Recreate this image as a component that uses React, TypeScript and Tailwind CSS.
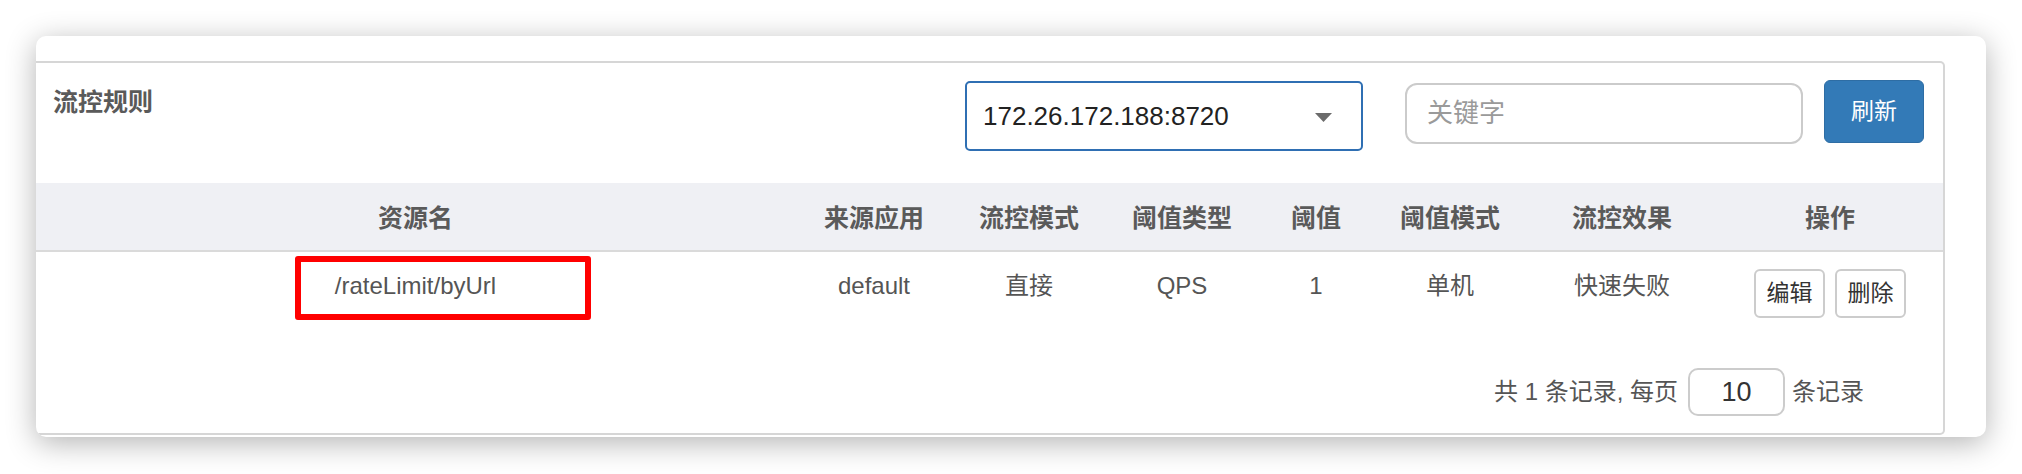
import React from "react";

// column widths of the rules table (px)
const gridCols = "grid grid-cols-[759px_158px_152px_154px_114px_154px_190px_226px]";

const headers = ["资源名", "来源应用", "流控模式", "阈值类型", "阈值", "阈值模式", "流控效果", "操作"];
const row = ["/rateLimit/byUrl", "default", "直接", "QPS", "1", "单机", "快速失败"];

export default function App() {
  return (
    <div className="w-[2022px] h-[474px] bg-white pt-[36px] pl-[36px] font-['Liberation_Sans','Noto_Sans_CJK_SC',sans-serif]">
      {/* Card */}
      <div className="w-[1950px] h-[401px] bg-white rounded-[10px] overflow-hidden shadow-[0_6px_30px_rgba(0,0,0,0.3)] pt-[25px]">
        {/* Panel */}
        <div className="w-[1909px] h-[374px] border-t-2 border-r-2 border-b-2 border-[#d6d6d6] rounded-r-[5px] flex flex-col">
          {/* Top bar */}
          <div className="h-[120px] flex items-start">
            <div className="pl-[17px] pt-[22px] text-[25px] leading-[34px] font-semibold text-[#5a5a5a]">流控规则</div>
            <div className="ml-auto mr-[19px] pt-[17px] flex items-start">
              <div className="mt-[1px] w-[398px] h-[70px] border-2 border-[#2f6fb3] rounded-[5px] flex items-center justify-between pl-[16px] pr-[29px]">
                <span className="text-[26px] text-[#222]">172.26.172.188:8720</span>
                <svg width="17" height="9" viewBox="0 0 17 9" className="mt-[2px]">
                  <polygon points="0,0 17,0 8.5,9" fill="#6b6b6b" />
                </svg>
              </div>
              <input
                className="ml-[42px] mt-[3px] w-[398px] h-[61px] border-2 border-[#cbcbcb] rounded-[12px] pl-[20px] text-[26px] text-[#333] outline-none placeholder:text-[#9a9a9a]"
                placeholder="关键字"
              />
              <button className="ml-[21px] w-[100px] h-[63px] bg-[#337ab7] border border-[#2e6da4] rounded-[6px] text-white text-[23px]">
                刷新
              </button>
            </div>
          </div>

          {/* Table header */}
          <div className={`${gridCols} h-[69px] bg-[#eff0f4] border-b-2 border-[#dadada] text-center text-[25px] font-semibold text-[#5a5a5a]`}>
            {headers.map((h) => (
              <div key={h} className="pt-[19px] leading-[32px]">{h}</div>
            ))}
          </div>

          {/* Row */}
          <div className={`${gridCols} h-[86px] text-center text-[24px] text-[#555]`}>
            {row.map((c, i) => (
              <div key={i} className="relative pt-[20px] leading-[28px]">
                {c}
                {i === 0 && (
                  <div className="absolute left-[259px] top-[4px] w-[296px] h-[64px] border-[6px] border-[#ff0000] rounded-[3px]" />
                )}
              </div>
            ))}
            <div className="flex justify-center gap-[10px] pt-[17px]">
              <button className="w-[71px] h-[49px] border-2 border-[#cccccc] rounded-[6px] text-[23px] text-[#333] bg-white">编辑</button>
              <button className="w-[71px] h-[49px] border-2 border-[#cccccc] rounded-[6px] text-[23px] text-[#333] bg-white">删除</button>
            </div>
          </div>

          {/* Pagination */}
          <div className="flex justify-end items-center pr-[79px] pt-[30px] text-[24px] text-[#555]">
            <span>共 1 条记录, 每页</span>
            <div className="ml-[10px] mr-[7px] w-[97px] h-[48px] border-2 border-[#cccccc] rounded-[10px] flex items-center justify-center text-[27px] text-[#333]">
              10
            </div>
            <span>条记录</span>
          </div>
        </div>
      </div>
    </div>
  );
}
